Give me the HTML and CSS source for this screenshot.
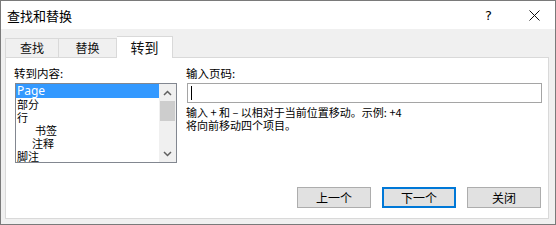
FILE: index.html
```html
<!DOCTYPE html>
<html lang="zh-CN">
<head>
    <meta charset="UTF-8">
    <title>查找和替换</title>
    <link rel="stylesheet" href="styles.css">
</head>
<body>
    <div class="window">
        <div class="titlebar">
            <span class="title">查找和替换</span>
            <span class="help">?</span>
            <svg class="close" width="11" height="11" viewBox="0 0 11 11">
                <path d="M0.5 0.5 L10.5 10.5 M10.5 0.5 L0.5 10.5" stroke="#111" stroke-width="1" fill="none"/>
            </svg>
        </div>

        <div class="tabs">
            <div class="tab">查找</div>
            <div class="tab tab-mid">替换</div>
            <div class="tab active">转到</div>
        </div>

        <div class="panel">
            <div class="cols">
                <div class="left">
                    <label class="lbl">转到内容:</label>
                    <div class="listbox">
                        <ul class="items">
                            <li class="selected">Page</li>
                            <li>部分</li>
                            <li>行</li>
                            <li class="indent2">书签</li>
                            <li class="indent1">注释</li>
                            <li>脚注</li>
                        </ul>
                        <div class="scrollbar">
                            <div class="arrow">
                                <svg width="9" height="6" viewBox="0 0 9 6"><path d="M1 5 L4.5 1.5 L8 5" stroke="#606060" stroke-width="1.5" fill="none"/></svg>
                            </div>
                            <div class="thumb"></div>
                            <div class="track"></div>
                            <div class="arrow">
                                <svg width="9" height="6" viewBox="0 0 9 6"><path d="M1 1 L4.5 4.5 L8 1" stroke="#606060" stroke-width="1.5" fill="none"/></svg>
                            </div>
                        </div>
                    </div>
                </div>

                <div class="right">
                    <label class="lbl" for="page">输入页码:</label>
                    <div class="field"><span class="caret"></span></div>
                    <p class="hint">输入 + 和 – 以相对于当前位置移动。示例: +4<br>将向前移动四个项目。</p>
                </div>
            </div>

            <div class="buttons">
                <button class="btn">上一个</button>
                <button class="btn default">下一个</button>
                <button class="btn">关闭</button>
            </div>
        </div>
    </div>
</body>
</html>
```

FILE: styles.css
```css
body {
    margin: 0;
    padding: 0;
    background: #ffffff;
    font-family: "Noto Sans CJK SC", "Noto Sans", sans-serif;
    font-size: 12px;
    color: #000;
}

.window {
    width: 556px;
    height: 225px;
    box-sizing: border-box;
    border: 1px solid #7a7a7a;
    background: #f0f0f0;
    display: flex;
    flex-direction: column;
}

.titlebar {
    height: 28px;
    background: #ffffff;
    display: flex;
    align-items: center;
    padding-left: 6px;
    flex-shrink: 0;
}

.title {
    font-size: 13px;
    flex: 1;
}

.help {
    font-family: "Segoe UI", "DejaVu Sans", sans-serif;
    font-size: 13px;
    margin-right: 37px;
}

.close {
    margin-right: 15px;
}

/* tab strip */
.tabs {
    display: flex;
    align-items: flex-end;
    height: 28px;
    margin-left: 4px;
    flex-shrink: 0;
}

.tab {
    height: 18px;
    line-height: 18px;
    border: 1px solid #d9d9d9;
    border-bottom: none;
    background: #f0f0f0;
    width: 52px;
    text-align: center;
    font-size: 12px;
    color: #111;
}

.tab-mid {
    border-left: none;
    width: 57px;
}

.active {
    position: relative;
    top: 1px;
    height: 21px;
    line-height: 21px;
    width: 55px;
    border-left: none;
    background: #ffffff;
    font-size: 14px;
    z-index: 1;
}

.panel {
    margin-left: 4px;
    width: 544px;
    height: 162px;
    box-sizing: border-box;
    border: 1px solid #d9d9d9;
    background: #ffffff;
    padding: 8px 6px 10px 9px;
    display: flex;
    flex-direction: column;
}

.cols {
    display: grid;
    grid-template-columns: 162px 1fr;
    column-gap: 10px;
    flex: 1;
}

.lbl {
    display: block;
    height: 14px;
    line-height: 14px;
    margin: 0 0 3px -1px;
    font-size: 11.5px;
}

/* list box */
.listbox {
    height: 80px;
    box-sizing: border-box;
    border: 1px solid #828790;
    display: flex;
}

.items {
    list-style: none;
    margin: 0;
    padding: 0;
    flex: 1;
}

.items li {
    height: 13px;
    line-height: 13px;
    padding-left: 1px;
    font-size: 11px;
}

.items .selected {
    background: #3399ff;
    color: #fff;
    height: 14px;
    line-height: 14px;
    font-size: 12px;
    font-family: "Segoe UI", "Noto Sans", sans-serif;
}

.items .indent1 {
    padding-left: 16px;
}

.items .indent2 {
    padding-left: 19px;
}

.scrollbar {
    width: 17px;
    background: #f0f0f0;
    display: flex;
    flex-direction: column;
}

.arrow {
    height: 17px;
    display: flex;
    align-items: center;
    justify-content: center;
}

.thumb {
    height: 20px;
    margin: 0 1px;
    background: #cdcdcd;
}

.track {
    flex: 1;
}

/* right column */
.field {
    height: 20px;
    box-sizing: border-box;
    border: 1px solid #a5a5a5;
    display: flex;
    align-items: center;
    padding-left: 3px;
}

.caret {
    width: 1px;
    height: 14px;
    background: #000;
}

.hint {
    margin: 3px 0 0 -1px;
    line-height: 13px;
    font-size: 11px;
}

/* buttons */
.buttons {
    display: flex;
    justify-content: flex-end;
    gap: 11px;
    margin-right: 1px;
}

.btn {
    width: 74px;
    height: 21px;
    box-sizing: border-box;
    border: 1px solid #adadad;
    background: #e1e1e1;
    font-family: "Noto Sans CJK SC", sans-serif;
    font-size: 12px;
    padding: 0;
    line-height: 17px;
    color: #000;
}

.default {
    border: 2px solid #0078d7;
}
```
